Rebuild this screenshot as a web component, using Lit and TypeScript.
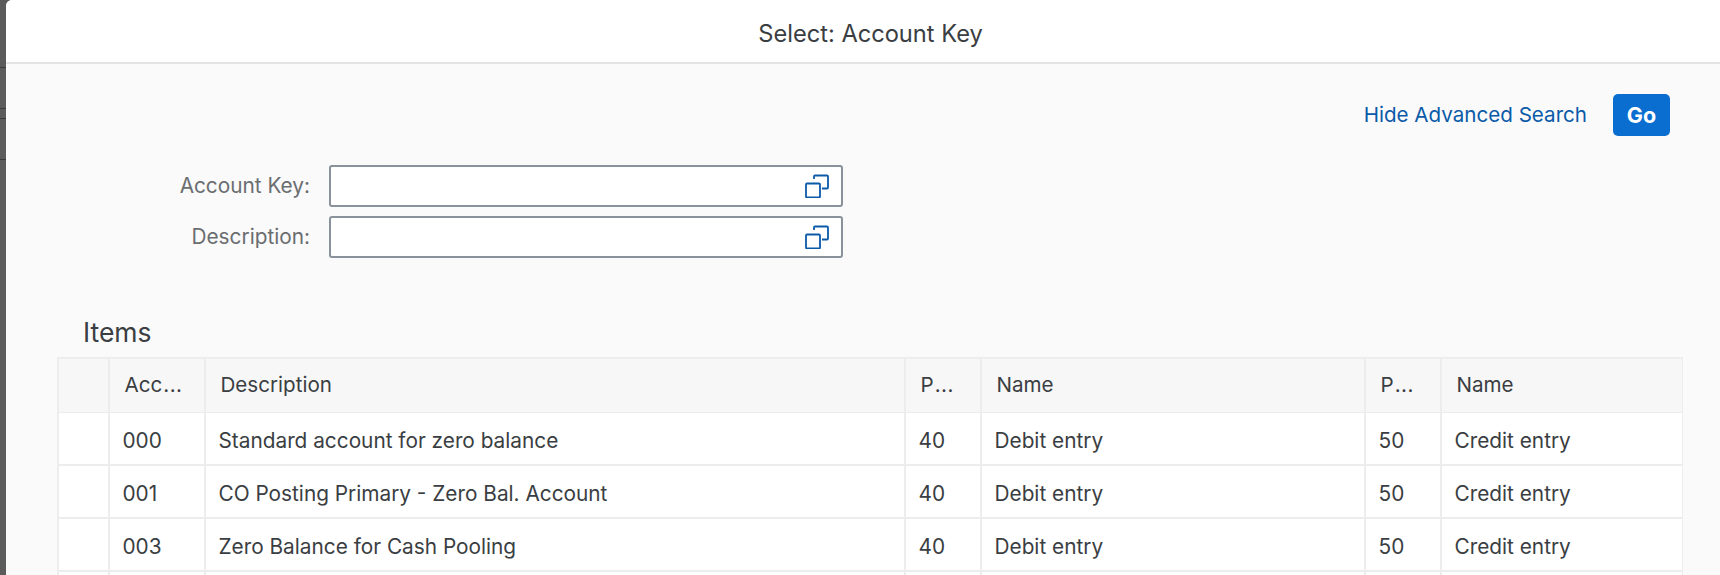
import { LitElement, html, css } from "lit";
import { customElement } from "lit/decorators.js";

const ROWS = [
  ["000", "Standard account for zero balance"],
  ["001", "CO Posting Primary - Zero Bal. Account"],
  ["003", "Zero Balance for Cash Pooling"],
];

const valueHelp = html`<svg class="vh" width="24" height="24" viewBox="0 0 24 24" fill="none" stroke="#0a5aa8" stroke-width="1.8">
  <path d="M9 5 V2.5 A1 1 0 0 1 10 1.5 H22 A1 1 0 0 1 23 2.5 V13.5 A1 1 0 0 1 22 14.5 H17" />
  <rect x="1" y="9.5" width="14" height="14" rx="1" />
</svg>`;

@customElement("app-root")
export class AppRoot extends LitElement {
  static styles = css`
    :host { display: block; width: 1720px; height: 575px; overflow: hidden; background-color: #5b5b5b; background-image: linear-gradient(#3a3a3a, #3a3a3a), linear-gradient(#3a3a3a, #3a3a3a), linear-gradient(#3a3a3a, #3a3a3a), linear-gradient(#3a3a3a, #3a3a3a); background-repeat: no-repeat; background-size: 6px 1px; background-position: 0 67px, 0 108px, 0 118px, 0 159px; font-family: "Inter", sans-serif; color: #3a3e42; }
    .dialog { margin-left: 6px; height: 575px; background: #fafafa; border-top-left-radius: 6px; overflow: hidden; }
    .head { background: #fff; border-bottom: 2px solid #e3e3e3; display: flex; align-items: center; justify-content: center; font-size: 23.65px; padding: 4px 0 0 15px; box-sizing: border-box; height: 64px; }
    .bar { display: flex; justify-content: flex-end; align-items: center; padding: 30px 50px 0 0; gap: 26px; height: 42px; }
    .link { color: #0a5aa8; font-size: 20.6px; padding-bottom: 2px; }
    .go { width: 57px; height: 42px; box-sizing: border-box; background: #0a6ed1; color: #fff; font-weight: 700; font-size: 21.5px; border-radius: 5px; display: flex; align-items: center; justify-content: center; }
    .form { padding: 29px 0 0 0; display: grid; grid-template-columns: 305px 514px; column-gap: 18px; row-gap: 9px; align-items: center; }
    .lbl { text-align: right; color: #6a6d70; font-size: 20.8px; padding: 0 1px 2px 0; }
    .inp { height: 42px; box-sizing: border-box; background: #fff; border: 2px solid #89919a; border-radius: 3px; display: flex; align-items: center; justify-content: flex-end; padding: 0 12px 1px 0; }
    .title { font-size: 26.5px; padding: 55px 0 0 77px; height: 44px; line-height: 38px; }
    .table { margin-left: 51px; width: 1626px; box-sizing: border-box; border: 2px solid #ededed; border-bottom: 0; border-right-width: 1.5px; display: grid; grid-template-columns: 50.5px 96px 700px 76px 384px 76px 1fr; grid-template-rows: 54px repeat(3, 53px) 10px; background: #fff; }
    .c { box-sizing: border-box; border-right: 2px solid #ededed; border-bottom: 2px solid #ededed; display: flex; align-items: center; padding: 3px 0 0 13px; font-size: 20.8px; white-space: nowrap; overflow: hidden; }
    .c.last { border-right: 0; }
    .h { background: #f7f7f7; border-bottom-width: 1px; padding: 0 0 2px 15px; font-size: 20.6px; }
    .dots { letter-spacing: 0.5px; margin-left: 1px; }
  `;

  render() {
    const trunc = (t: string) => html`${t}<span class="dots">...</span>`;
    return html`<div class="dialog">
      <div class="head">Select: Account Key</div>
      <div class="bar"><span class="link">Hide Advanced Search</span><span class="go">Go</span></div>
      <div class="form">
        <div class="lbl">Account Key:</div><div class="inp">${valueHelp}</div>
        <div class="lbl">Description:</div><div class="inp">${valueHelp}</div>
      </div>
      <div class="title">Items</div>
      <div class="table">
        <div class="c h"></div><div class="c h">${trunc("Acc")}</div><div class="c h">Description</div><div class="c h">${trunc("P")}</div><div class="c h">Name</div><div class="c h">${trunc("P")}</div><div class="c h last">Name</div>
        ${ROWS.map(([k, d]) => html`
          <div class="c"></div><div class="c">${k}</div><div class="c">${d}</div><div class="c">40</div><div class="c">Debit entry</div><div class="c">50</div><div class="c last">Credit entry</div>`)}
        ${[0, 1, 2, 3, 4, 5, 6].map((i) => html`<div class="c ${i === 6 ? "last" : ""}"></div>`)}
      </div>
    </div>`;
  }
}
